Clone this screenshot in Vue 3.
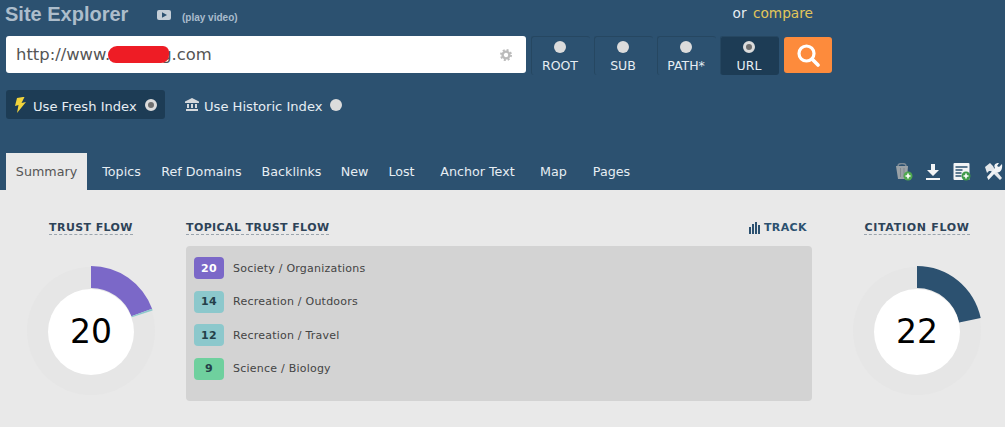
<script setup>
const scopes = [
  { label: 'ROOT' },
  { label: 'SUB' },
  { label: 'PATH*' },
  { label: 'URL', active: true }
]
const tabs = [
  { label: 'Topics', w: 39 },
  { label: 'Ref Domains', w: 81 },
  { label: 'Backlinks', w: 59 },
  { label: 'New', w: 27 },
  { label: 'Lost', w: 27 },
  { label: 'Anchor Text', w: 75, wide: true },
  { label: 'Map', w: 27, wide: true },
  { label: 'Pages', w: 39, wide: true }
]
const topics = [
  { score: 20, name: 'Society / Organizations', kind: 'purple' },
  { score: 14, name: 'Recreation / Outdoors', kind: 'teal' },
  { score: 12, name: 'Recreation / Travel', kind: 'teal' },
  { score: 9, name: 'Science / Biology', kind: 'green' }
]
function point(deg, r) {
  const a = (deg * Math.PI) / 180
  return `${(65 + r * Math.sin(a)).toFixed(2)} ${(65 - r * Math.cos(a)).toFixed(2)}`
}
function slice(from, to) {
  return `M${point(from, 43)} L${point(from, 65)} A65 65 0 0 1 ${point(to, 65)} L${point(to, 43)} A43 43 0 0 0 ${point(from, 43)}Z`
}
</script>

<template>
  <div class="page">
    <header class="head">
      <div class="title-row">
        <h1 class="title">Site Explorer</h1>
        <svg class="play" viewBox="0 0 14 10" width="14" height="10">
          <rect width="14" height="10" rx="2" fill="#c4ced7" />
          <path d="M5 2.200 10 5 5 7.800Z" fill="#2c5170" />
        </svg>
        <span class="play-text">(play video)</span>
        <span class="or">or <a class="compare">compare</a></span>
      </div>

      <div class="search-row">
        <div class="url">
          <span class="url-text">http://www.<span class="blot"></span>g.com</span>
          <svg class="gear" viewBox="0 0 12 12" width="12" height="12">
            <circle cx="6" cy="6" r="3.400" fill="none" stroke="#bbb" stroke-width="2.400" />
            <circle cx="6" cy="6" r="5" fill="none" stroke="#bbb" stroke-width="2" stroke-dasharray="2 1.930" />
          </svg>
        </div>
        <div class="scopes">
          <div v-for="s in scopes" :key="s.label" class="scope" :class="{ on: s.active }">
            <span class="radio" :class="{ checked: s.active }"></span>
            <span class="scope-label">{{ s.label }}</span>
          </div>
        </div>
        <button class="go" aria-label="Search">
          <svg viewBox="0 0 24 24" width="24" height="24">
            <circle cx="10.500" cy="10.500" r="7.500" fill="none" stroke="#fff" stroke-width="3.200" />
            <path d="M16 16l6 6" stroke="#fff" stroke-width="3.600" stroke-linecap="round" />
          </svg>
        </button>
      </div>

      <div class="index-row">
        <div class="index fresh">
          <svg viewBox="0 0 12 16" width="12" height="16">
            <path d="M8 0 2 1 0 9l3.500-1L2 16 11 5 6.500 6 9.500 0Z" fill="#f2d43c" />
          </svg>
          <span class="index-text">Use Fresh Index</span>
          <span class="radio checked"></span>
        </div>
        <div class="index historic">
          <svg viewBox="0 0 14 13" width="14" height="13">
            <path d="M7 0 14 3.500V5H0V3.500Z M1 11h12v2H1Z M2 6h2v4H2Z M6 6h2v4H6Z M10 6h2v4h-2Z" fill="#d4d8dc" />
          </svg>
          <span class="index-text">Use Historic Index</span>
          <span class="radio"></span>
        </div>
      </div>

      <nav class="tabs">
        <span class="tab current">Summary</span>
        <span
          v-for="t in tabs"
          :key="t.label"
          class="tab"
          :class="{ wide: t.wide }"
          :style="{ width: t.w + 'px' }"
        >{{ t.label }}</span>
        <div class="tools">
          <svg viewBox="0 0 18 18" width="18" height="18">
            <path d="M1 3h12l-1 13H3Z" fill="#9aa1a6" />
            <path d="M3 3a4 2.500 0 0 1 8 0" fill="none" stroke="#7c8a96" stroke-width="1.500" />
            <path d="M5.500 5v9M9 5v9" stroke="#7f878d" stroke-width="1" />
            <circle cx="13" cy="13" r="4.500" fill="#4fa84f" />
            <path d="M13 10.500v5M10.500 13h5" stroke="#fff" stroke-width="1.600" />
          </svg>
          <svg viewBox="0 0 14 16" width="14" height="16">
            <path d="M5 0h4v6h4L7 12 1 6h4ZM0 14h14v2H0Z" fill="#f2f4f6" />
          </svg>
          <svg viewBox="0 0 18 18" width="18" height="18">
            <rect x="0.500" width="16" height="17" rx="1" fill="#f2f4f6" />
            <path d="M2.500 4h12M2.500 7h7M2.500 10h6M2.500 13h6" stroke="#2c5170" stroke-width="1.400" />
            <circle cx="13" cy="13" r="4.500" fill="#3f9a4a" />
            <path d="M13 10.500v5M10.500 13h5" stroke="#fff" stroke-width="1.600" />
          </svg>
          <svg viewBox="0 0 20 18" width="20" height="18">
            <path d="M1 4 6 0l3 3 1 2 8 10-2 2-9-9-2 0-2 2Z" fill="#e4e7ea" />
            <path d="M18 1l-3 3-2-1 2-3c-3-.500-6 2-4 5L3 14l1.500 3 7.500-8c3 1.500 7-1 6-8Z" fill="#f2f4f6" />
          </svg>
        </div>
      </nav>
    </header>

    <main class="body">
      <section class="side left">
        <h2 class="label dotted">TRUST FLOW</h2>
        <div class="donut">
          <svg viewBox="0 0 130 130" width="130" height="130">
            <circle cx="65" cy="65" r="64" fill="#e6e6e6" />
            <path :d="slice(0, 70)" fill="#7b68c8" />
            <path :d="slice(70, 71.500)" fill="#8cc8cc" />
            <circle cx="65" cy="66" r="43" fill="#fff" />
          </svg>
          <span class="num">20</span>
        </div>
      </section>

      <section class="middle">
        <div class="mid-head">
          <h2 class="label dotted">TOPICAL TRUST FLOW</h2>
          <span class="label track">
            <svg viewBox="0 0 12 12" width="12" height="12">
              <path d="M0 5h2v7H0ZM3 2h2v10H3ZM6 0h2v12H6ZM9 3h2v9H9Z" fill="#2c5170" />
            </svg>
            TRACK
          </span>
        </div>
        <div class="panel">
          <div v-for="t in topics" :key="t.name" class="topic">
            <span class="badge" :class="t.kind">{{ t.score }}</span>
            <span class="topic-name">{{ t.name }}</span>
          </div>
        </div>
      </section>

      <section class="side right">
        <h2 class="label dotted">CITATION FLOW</h2>
        <div class="donut">
          <svg viewBox="0 0 130 130" width="130" height="130">
            <circle cx="65" cy="65" r="64" fill="#e6e6e6" />
            <path :d="slice(0, 78.500)" fill="#2c5170" />
            <circle cx="65" cy="66" r="43" fill="#fff" />
          </svg>
          <span class="num">22</span>
        </div>
      </section>
    </main>
  </div>
</template>

<style>
html, body { margin: 0; background: #e9e9e9; }
</style>

<style scoped>
.page {
  width: 1005px;
  height: 427px;
  overflow: hidden;
  background: #e9e9e9;
  font-family: "DejaVu Sans", Verdana, sans-serif;
}
.head {
  height: 190px;
  background: #2c5170;
  display: flex;
  flex-direction: column;
  box-sizing: border-box;
  padding-top: 3px;
}
.title-row {
  height: 33px;
  display: flex;
  align-items: flex-start;
  padding-left: 5px;
}
.title {
  margin: 0;
  width: 152px;
  font: bold 20px/23px "Liberation Sans", Arial, sans-serif;
  color: #adbdcb;
}
.play { margin-top: 7px; }
.play-text {
  margin: 9px 0 0 11px;
  font: bold 10px/12px "Liberation Sans", Arial, sans-serif;
  color: #a9bccd;
}
.or {
  margin: 2px 192px 0 auto;
  font-size: 13.700px;
  line-height: 16px;
  color: #e6edf3;
}
.compare { color: #e3c65a; margin-left: 2px; }
.search-row {
  display: flex;
  align-items: flex-start;
  padding-left: 6px;
}
.url {
  width: 520px;
  height: 37px;
  box-sizing: border-box;
  background: #fff;
  border-radius: 3px;
  display: flex;
  align-items: center;
  justify-content: space-between;
  padding: 0 14px 0 10px;
}
.url-text {
  font-size: 16.400px;
  color: #555;
  display: flex;
  align-items: center;
}
.blot {
  width: 61px;
  height: 17px;
  margin: 0 -8px 0 -2px;
  background: #ee1c25;
  border-radius: 9px 6px 8px 8px;
  position: relative;
  z-index: 1;
}
.scopes {
  display: flex;
  gap: 4px;
  margin-left: 5px;
}
.scope {
  width: 59px;
  height: 39px;
  box-sizing: border-box;
  border-left: 1px solid #264761;
  border-top: 1px solid #264761;
  border-radius: 3px;
  display: flex;
  flex-direction: column;
  align-items: center;
  padding: 4px 2px 0 0;
  gap: 5px;
  color: #e6edf3;
  font-size: 12.500px;
  line-height: 16px;
}
.scope.on { background: #1d3c55; }
.radio {
  width: 12px;
  height: 12px;
  flex: none;
  border-radius: 50%;
  background: #dcdcdc;
  box-sizing: border-box;
}
.radio.checked {
  background: #6f6f6f;
  border: 3px solid #dcdcdc;
}
.go {
  margin: 1px 0 0 5px;
  width: 48px;
  height: 36px;
  border: 0;
  border-radius: 3px;
  background: #fd8b3c;
  padding: 0;
  display: flex;
  align-items: center;
  justify-content: center;
}
.index-row {
  display: flex;
  margin-top: 15px;
  padding-left: 6px;
  color: #e6edf3;
  font-size: 13.100px;
}
.index {
  height: 29px;
  display: flex;
  align-items: center;
}
.index-text { padding-top: 3px; margin-left: 6px; }
.fresh {
  width: 159px;
  box-sizing: border-box;
  background: #1d3c55;
  border-radius: 3px;
  padding-left: 9px;
}
.fresh .radio { margin-left: 8px; }
.historic { margin-left: 20px; }
.historic .index-text { margin-left: 5px; }
.historic .radio { margin-left: 7px; }
.tabs {
  margin-top: auto;
  height: 37px;
  display: flex;
  align-items: center;
  padding-left: 6px;
  gap: 20px;
  font-size: 12.700px;
  color: #e6edf3;
}
.tab {
  height: 37px;
  box-sizing: border-box;
  line-height: 36px;
  padding-top: 1px;
  white-space: nowrap;
  display: flex;
  justify-content: center;
  flex: none;
}
.tab.wide { margin-left: 5px; }
.tab.current {
  width: 81px;
  margin-right: -5px;
  background: #e9e9e9;
  color: #555;
}
.tools {
  margin-left: auto;
  margin-right: 1px;
  display: flex;
  align-items: center;
  gap: 13px;
  padding-top: 1px;
}
.body {
  display: flex;
  align-items: flex-start;
  padding-top: 31px;
}
.side {
  display: flex;
  flex-direction: column;
  align-items: center;
}
.left { width: 182px; margin-right: 4px; }
.right { width: 176px; margin-left: 17px; }
.right .label { letter-spacing: 0.700px; }
.label {
  margin: 0;
  font-size: 11px;
  line-height: 14px;
  font-weight: bold;
  letter-spacing: 0.400px;
  color: #2d4358;
}
.dotted { border-bottom: 1px dashed #9aa4ad; line-height: 13px; }
.donut {
  position: relative;
  width: 130px;
  height: 130px;
  margin-top: 31px;
}
.donut svg { display: block; }
.num {
  position: absolute;
  inset: 1px 0 0;
  display: flex;
  align-items: center;
  justify-content: center;
  font-size: 33px;
  color: #000;
}
.middle { width: 626px; }
.mid-head {
  display: flex;
  justify-content: space-between;
  padding-right: 5px;
}
.track {
  display: flex;
  align-items: center;
  gap: 3px;
  color: #2c5170;
}
.panel {
  margin-top: 11px;
  height: 155px;
  box-sizing: border-box;
  background: #d3d3d3;
  border-radius: 4px;
  padding: 11px 8px;
  display: flex;
  flex-direction: column;
  gap: 11px;
}
.topic {
  display: flex;
  align-items: center;
  height: 22.500px;
}
.badge {
  width: 30px;
  height: 22px;
  border-radius: 4px;
  display: flex;
  align-items: center;
  justify-content: center;
  font-size: 11px;
  font-weight: bold;
  letter-spacing: 0.400px;
  color: #24404a;
}
.badge.purple { background: #7b68c8; color: #fff; }
.badge.teal { background: #8cc8cc; }
.badge.green { background: #6fd09e; }
.topic-name {
  margin-left: 9px;
  font-size: 11px;
  letter-spacing: 0.230px;
  color: #444;
}
</style>
